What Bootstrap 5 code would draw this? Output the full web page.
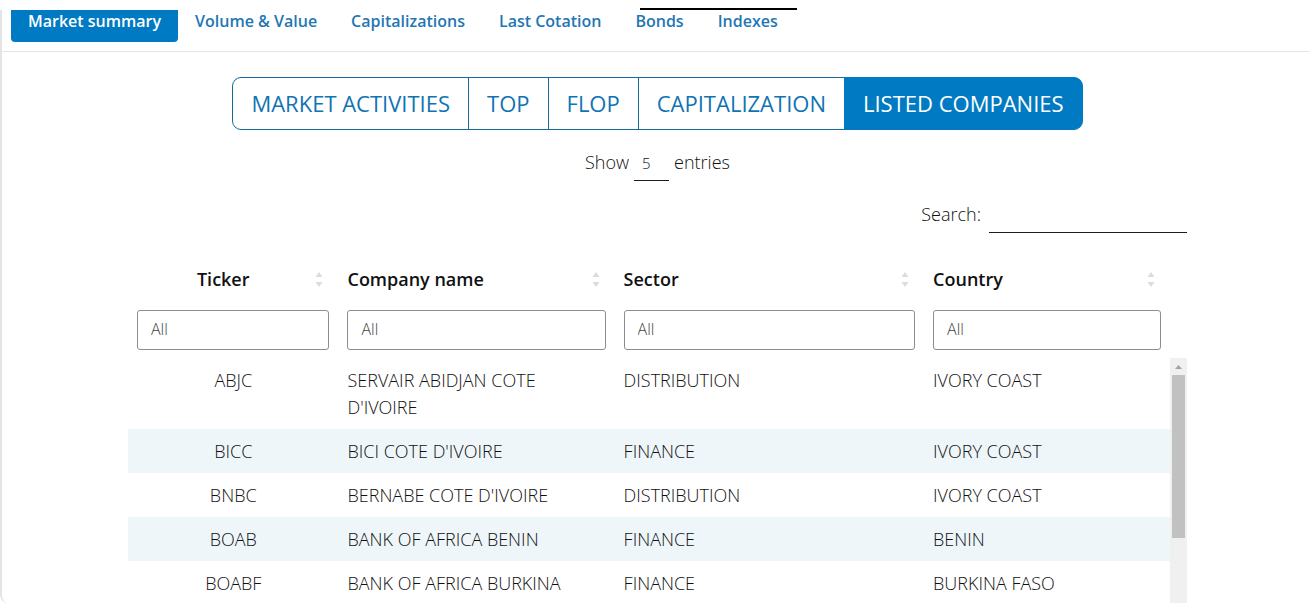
<!DOCTYPE html>
<html lang="en">
<head>
<meta charset="utf-8">
<meta name="viewport" content="width=device-width, initial-scale=1">
<title>Market summary</title>
<link href="https://cdn.jsdelivr.net/npm/bootstrap@5.3.0/dist/css/bootstrap.min.css" rel="stylesheet">
<style>
  body { font-family: "Open Sans", sans-serif; font-size: 18px; line-height: 27px; font-weight: 300; color: #111; background: #fff; }
  .page-shell { height: 100vh; }
  .top-strip { height: 10px; }
  .top-rule { width: 12%; height: 2px; margin-left: 48.9%; background: #000; }
  .market-panel { border-left: 2px solid #e4e4e4; border-bottom-left-radius: 8px; min-height: 0; }
  .market-tabs { --bs-nav-link-padding-x: 17px; --bs-nav-link-padding-y: 0; border-bottom: 1px solid #e6e6e6; padding: 0 9px 9px; }
  .market-tabs .nav-link { font-size: 16px; font-weight: 600; line-height: 22px; padding-bottom: 10px; color: #1f77b4; border-radius: 0 0 4px 4px; }
  .market-tabs .nav-link.active { background: #007ac2; color: #fff; }
  .listing { max-width: 1059px; min-height: 0; }
  .view-bar { padding-top: 25px; }
  .view-switch .btn { --bs-btn-color: #1073b3; --bs-btn-border-color: #146c9c; --bs-btn-padding-x: 18px; --bs-btn-padding-y: 9px; --bs-btn-font-size: 22px; --bs-btn-line-height: 33px; --bs-btn-font-weight: 400; --bs-btn-border-radius: 9px; --bs-btn-active-bg: #007ac2; --bs-btn-active-border-color: #007ac2; --bs-btn-active-color: #fff; --bs-btn-hover-color: #fff; --bs-btn-hover-bg: #007ac2; }
  .control-row { margin-top: 15px; }
  .control-text { padding-bottom: 2px; }
  .line-field { border: 0; border-bottom: 1px solid #1d1d1d; border-radius: 0; background: transparent; font-weight: 300; color: #111; height: 36px; }
  .entries-field { appearance: none; width: 35px; font-size: 15px; padding: 2px 8px 0; margin: 0 5px; }
  .search-field { width: 198px; }
  .company-head { margin-top: 33px; }
  .company-table { table-layout: fixed; --bs-table-color: #111; --bs-table-bg: transparent; }
  .company-table th { font-weight: 600; padding: 0 9px 8px; border: 0; }
  .company-table td { padding: 9px 9px 8px; border: 0; }
  .company-table tbody tr:nth-child(even) { background: #eef6fa; }
  .heading-row { margin-bottom: 17px; }
  .sort-btn { width: 20px; line-height: 0; }
  .filter-field { height: 40px; padding: 0 13px 2px; border: 1px solid #8c8c96; border-radius: 3px; font-size: 16px; font-weight: 300; }
  .filter-field::placeholder { color: #444; }
  .table-area { min-width: 0; }
  .scroll-view { min-height: 0; }
  .gutter { width: 17px; flex: none; }
  .scroll-track { background: #f0f0f0; }
  .scroll-thumb { width: 13px; height: 163px; background: #c1c1c1; }
</style>
</head>
<body>
<div class="page-shell d-flex flex-column overflow-hidden">
  <div class="top-strip d-flex align-items-end flex-shrink-0"><div class="top-rule"></div></div>
  <main class="market-panel d-flex flex-column flex-fill overflow-hidden">
    <nav class="nav market-tabs flex-shrink-0">
      <a class="nav-link active" href="#summary" aria-current="page">Market summary</a>
      <a class="nav-link" href="#volume">Volume &amp; Value</a>
      <a class="nav-link" href="#capitalizations">Capitalizations</a>
      <a class="nav-link" href="#cotation">Last Cotation</a>
      <a class="nav-link" href="#bonds">Bonds</a>
      <a class="nav-link" href="#indexes">Indexes</a>
    </nav>
    <div class="ps-1 d-flex flex-column flex-fill scroll-view">
      <section class="listing w-100 mx-auto d-flex flex-column flex-fill">
        <div class="view-bar text-center flex-shrink-0">
          <div class="btn-group view-switch" role="group" aria-label="Market views">
            <button type="button" class="btn">MARKET ACTIVITIES</button>
            <button type="button" class="btn">TOP</button>
            <button type="button" class="btn">FLOP</button>
            <button type="button" class="btn">CAPITALIZATION</button>
            <button type="button" class="btn active">LISTED COMPANIES</button>
          </div>
        </div>
        <div class="control-row d-flex justify-content-center align-items-center flex-shrink-0">
          <label for="entries" class="control-text">Show</label>
          <select id="entries" class="line-field entries-field"><option>5</option><option>10</option><option>25</option></select>
          <span class="control-text">entries</span>
        </div>
        <div class="d-flex justify-content-end align-items-center gap-2 flex-shrink-0 mt-3">
          <label for="search" class="control-text">Search:</label>
          <input type="search" id="search" class="line-field search-field">
        </div>
        <div class="company-head d-flex flex-shrink-0">
          <div class="flex-fill table-area">
            <table class="table company-table mb-0">
              <colgroup><col style="width:20.2%"><col style="width:26.5%"><col style="width:29.7%"><col style="width:23.6%"></colgroup>
              <thead><tr>
                <th scope="col">
                  <div class="heading-row d-flex align-items-center"><span class="flex-fill text-center">Ticker</span><button type="button" class="sort-btn btn p-0 border-0" aria-label="Sort by ticker"><svg width="8" height="16" viewBox="0 0 8 16" fill="#dcdcdc"><path d="M4 0 7.500 5H.5zM4 15 7.500 10H.5z"/></svg></button></div>
                  <input type="text" class="form-control filter-field" placeholder="All" aria-label="Filter ticker">
                </th>
                <th scope="col">
                  <div class="heading-row d-flex align-items-center"><span class="flex-fill">Company name</span><button type="button" class="sort-btn btn p-0 border-0" aria-label="Sort by company name"><svg width="8" height="16" viewBox="0 0 8 16" fill="#dcdcdc"><path d="M4 0 7.500 5H.5zM4 15 7.500 10H.5z"/></svg></button></div>
                  <input type="text" class="form-control filter-field" placeholder="All" aria-label="Filter company name">
                </th>
                <th scope="col">
                  <div class="heading-row d-flex align-items-center"><span class="flex-fill">Sector</span><button type="button" class="sort-btn btn p-0 border-0" aria-label="Sort by sector"><svg width="8" height="16" viewBox="0 0 8 16" fill="#dcdcdc"><path d="M4 0 7.500 5H.5zM4 15 7.500 10H.5z"/></svg></button></div>
                  <input type="text" class="form-control filter-field" placeholder="All" aria-label="Filter sector">
                </th>
                <th scope="col">
                  <div class="heading-row d-flex align-items-center"><span class="flex-fill">Country</span><button type="button" class="sort-btn btn p-0 border-0" aria-label="Sort by country"><svg width="8" height="16" viewBox="0 0 8 16" fill="#dcdcdc"><path d="M4 0 7.500 5H.5zM4 15 7.500 10H.5z"/></svg></button></div>
                  <input type="text" class="form-control filter-field" placeholder="All" aria-label="Filter country">
                </th>
              </tr></thead>
            </table>
          </div>
          <div class="gutter"></div>
        </div>
        <div class="scroll-view d-flex flex-fill overflow-hidden">
          <div class="flex-fill table-area">
            <table class="table company-table mb-0">
              <colgroup><col style="width:20.2%"><col style="width:26.5%"><col style="width:29.7%"><col style="width:23.6%"></colgroup>
              <tbody>
                <tr><td class="text-center">ABJC</td><td>SERVAIR ABIDJAN COTE D'IVOIRE</td><td>DISTRIBUTION</td><td>IVORY COAST</td></tr>
                <tr><td class="text-center">BICC</td><td>BICI COTE D'IVOIRE</td><td>FINANCE</td><td>IVORY COAST</td></tr>
                <tr><td class="text-center">BNBC</td><td>BERNABE COTE D'IVOIRE</td><td>DISTRIBUTION</td><td>IVORY COAST</td></tr>
                <tr><td class="text-center">BOAB</td><td>BANK OF AFRICA BENIN</td><td>FINANCE</td><td>BENIN</td></tr>
                <tr><td class="text-center">BOABF</td><td>BANK OF AFRICA BURKINA</td><td>FINANCE</td><td>BURKINA FASO</td></tr>
              </tbody>
            </table>
          </div>
          <div class="gutter scroll-track d-flex flex-column align-items-center" aria-hidden="true">
            <svg class="flex-shrink-0" width="17" height="17" viewBox="0 0 17 17"><path d="M5 11 8.500 7 12 11z" fill="#a3a3a3"/></svg>
            <div class="scroll-thumb flex-shrink-0"></div>
          </div>
        </div>
      </section>
    </div>
  </main>
</div>
<script src="https://cdn.jsdelivr.net/npm/bootstrap@5.3.0/dist/js/bootstrap.bundle.min.js"></script>
</body>
</html>
